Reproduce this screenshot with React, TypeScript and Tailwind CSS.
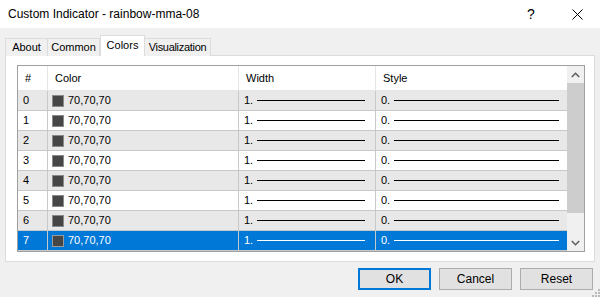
import React from 'react';

const rows = [0, 1, 2, 3, 4, 5, 6, 7];

function Swatch({ selected }: { selected: boolean }) {
  return (
    <span
      className={`inline-block w-[12px] h-[12px] bg-[#464646] border ${
        selected ? 'border-[#9a9a9a]' : 'border-[#8a8a8a]'
      }`}
    />
  );
}

function Row({ n }: { n: number }) {
  const sel = n === 7;
  const bg = sel ? 'bg-[#0078d7] text-white' : n % 2 === 0 ? 'bg-[#e8e8e8] text-black' : 'bg-white text-black';
  const line = sel ? 'bg-white' : 'bg-black';
  return (
    <div className={`flex h-[20px] border-b border-[#c8c8c8] ${bg}`}>
      <div className="w-[30px] shrink-0 border-r border-[#c8c8c8] pl-[5px] flex items-center">{n}</div>
      <div className="w-[191px] shrink-0 border-r border-[#c8c8c8] pl-[4px] flex items-center gap-[4px]">
        <Swatch selected={sel} />
        <span>70,70,70</span>
      </div>
      <div className="w-[137px] shrink-0 border-r border-[#c8c8c8] pl-[5px] flex items-center">
        <span className="w-[13px]">1.</span>
        <span className={`h-px w-[108px] ${line}`} />
      </div>
      <div className="w-[190px] shrink-0 pl-[5px] flex items-center">
        <span className="w-[13px]">0.</span>
        <span className={`h-px w-[165px] ${line}`} />
      </div>
    </div>
  );
}

export default function App() {
  return (
    <div
      className="w-[600px] h-[297px] bg-[#f0f0f0] flex flex-col text-[11px] text-black overflow-hidden relative"
      style={{ fontFamily: '"Liberation Sans", Arial, sans-serif' }}
    >
      {/* title bar */}
      <div className="h-[28px] bg-white flex items-center shrink-0">
        <span className="pl-[8px] text-[12px] flex-1">Custom Indicator - rainbow-mma-08</span>
        <span className="w-[46px] text-center text-[14px] leading-none">?</span>
        <span className="w-[46px] flex justify-center">
          <svg width="11" height="11" viewBox="0 0 11 11">
            <path d="M0.5 0.5L10.5 10.5M10.5 0.5L0.5 10.5" stroke="#000" strokeWidth="1" />
          </svg>
        </span>
      </div>

      {/* tabs */}
      <div className="h-[27px] flex items-end pl-[5px] shrink-0 relative z-10">
        <div className="w-[43px] h-[18px] mb-[-1px] border border-b-0 border-[#dcdcdc] bg-[#f0f0f0] flex items-center justify-center">About</div>
        <div className="w-[52px] h-[18px] mb-[-1px] border border-b-0 border-l-0 border-[#dcdcdc] bg-[#f0f0f0] flex items-center justify-center">Common</div>
        <div className="w-[45px] h-[21px] mb-[-1px] border border-b-0 border-[#dcdcdc] bg-white flex items-center justify-center pb-[2px]">Colors</div>
        <div className="w-[66px] h-[18px] mb-[-1px] border border-b-0 border-l-0 border-[#dcdcdc] bg-[#f0f0f0] flex items-center justify-center tracking-[-0.3px]">Visualization</div>
      </div>

      {/* panel */}
      <div className="ml-[5px] w-[590px] h-[207px] bg-white border border-[#dcdcdc] pl-[11px] pt-[9px] shrink-0">
        <div className="w-[568px] h-[187px] border border-[#a0a0a0] flex">
          <div className="w-[549px] flex flex-col">
            <div className="flex h-[25px] bg-white border-b border-[#e5e5e5]">
              <div className="w-[30px] shrink-0 border-r border-[#e5e5e5] pl-[7px] flex items-center">#</div>
              <div className="w-[191px] shrink-0 border-r border-[#e5e5e5] pl-[7px] flex items-center">Color</div>
              <div className="w-[137px] shrink-0 border-r border-[#e5e5e5] pl-[7px] flex items-center">Width</div>
              <div className="w-[191px] shrink-0 pl-[7px] flex items-center">Style</div>
            </div>
            {rows.map((n) => (
              <Row key={n} n={n} />
            ))}
          </div>
          {/* scrollbar */}
          <div className="w-[17px] bg-[#f0f0f0] flex flex-col">
            <div className="h-[17px] flex items-center justify-center">
              <svg width="9" height="6" viewBox="0 0 9 6">
                <path d="M0.8 5L4.5 1.3L8.2 5" stroke="#606060" strokeWidth="1.6" fill="none" />
              </svg>
            </div>
            <div className="h-[130px] bg-[#cdcdcd]" />
            <div className="flex-1" />
            <div className="h-[17px] flex items-center justify-center">
              <svg width="9" height="6" viewBox="0 0 9 6">
                <path d="M0.8 1L4.5 4.7L8.2 1" stroke="#606060" strokeWidth="1.6" fill="none" />
              </svg>
            </div>
          </div>
        </div>
      </div>

      {/* buttons */}
      <div className="flex justify-end gap-[8px] pr-[7px] pt-[6px]">
        <button className="w-[73px] h-[22px] bg-[#e1e1e1] border-2 border-[#0078d7] text-[12px]">OK</button>
        <button className="w-[73px] h-[22px] bg-[#e1e1e1] border border-[#adadad] text-[12px]">Cancel</button>
        <button className="w-[73px] h-[22px] bg-[#e1e1e1] border border-[#adadad] text-[12px]">Reset</button>
      </div>

      {/* size grip */}
      <svg className="absolute right-0 bottom-0" width="8" height="8" viewBox="0 0 8 8">
        <rect x="6" y="0" width="2" height="2" fill="#bcbcbc" />
        <rect x="3" y="3" width="2" height="2" fill="#bcbcbc" />
        <rect x="6" y="3" width="2" height="2" fill="#bcbcbc" />
        <rect x="0" y="6" width="2" height="2" fill="#bcbcbc" />
        <rect x="3" y="6" width="2" height="2" fill="#bcbcbc" />
        <rect x="6" y="6" width="2" height="2" fill="#bcbcbc" />
      </svg>
    </div>
  );
}
